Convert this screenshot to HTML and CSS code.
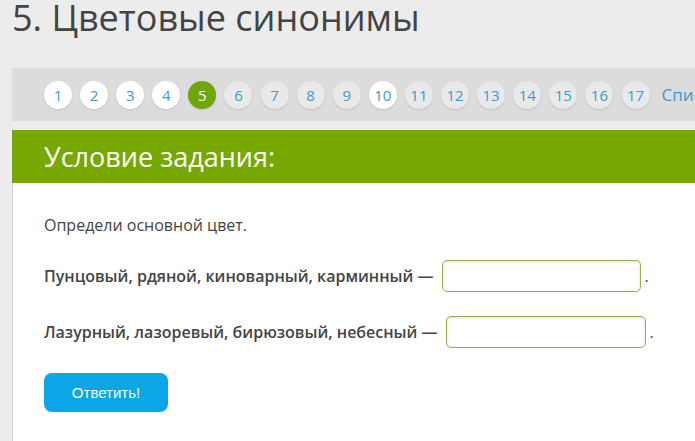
FILE: index.html
```html
<!DOCTYPE html>
<html lang="ru">
<head>
    <meta charset="UTF-8">
    <title>5. Цветовые синонимы</title>
    <link rel="stylesheet" href="styles.css">
</head>
<body>

<div class="page">
    <h1 class="task-title">5. Цветовые синонимы</h1>

    <nav class="pager">
        <a class="pager-item done" href="#">1</a>
        <a class="pager-item done" href="#">2</a>
        <a class="pager-item done" href="#">3</a>
        <a class="pager-item done" href="#">4</a>
        <a class="pager-item active" href="#">5</a>
        <a class="pager-item" href="#">6</a>
        <a class="pager-item" href="#">7</a>
        <a class="pager-item" href="#">8</a>
        <a class="pager-item" href="#">9</a>
        <a class="pager-item done" href="#">10</a>
        <a class="pager-item" href="#">11</a>
        <a class="pager-item" href="#">12</a>
        <a class="pager-item" href="#">13</a>
        <a class="pager-item" href="#">14</a>
        <a class="pager-item" href="#">15</a>
        <a class="pager-item" href="#">16</a>
        <a class="pager-item" href="#">17</a>
        <a class="pager-list" href="#">Список заданий</a>
    </nav>

    <section class="task">
        <h2 class="task-head">Условие задания:</h2>
        <div class="task-body">
            <p class="intro">Определи основной цвет.</p>

            <div class="answer-row">
                <span class="answer-label">Пунцовый, рдяной, киноварный, карминный —</span>
                <input class="answer-input first" type="text">
                <span class="dot">.</span>
            </div>

            <div class="answer-row">
                <span class="answer-label">Лазурный, лазоревый, бирюзовый, небесный —</span>
                <input class="answer-input" type="text">
                <span class="dot">.</span>
            </div>

            <button class="submit" type="button">Ответить!</button>
        </div>
    </section>
</div>

</body>
</html>
```

FILE: styles.css
```css
/* Global */
html, body {
    margin: 0;
    padding: 0;
    height: 100%;
    overflow: hidden;
}

body {
    background: #ececec;
    font-family: 'Open Sans', 'Noto Sans', sans-serif;
    color: #444;
}

.page {
    padding-left: 12px;
}

/* Title */
.task-title {
    margin: 0 0 32px;
    font-size: 36px;
    font-weight: normal;
    line-height: 36px;
    color: #444;
    white-space: nowrap;
}

/* Pager */
.pager {
    display: flex;
    align-items: center;
    gap: 8.1px;
    height: 53px;
    padding-left: 32px;
    background: #dcdcdc;
    white-space: nowrap;
}

.pager-item {
    flex: none;
    width: 28px;
    height: 28px;
    border-radius: 50%;
    background: #e9e9e9;
    box-shadow: 0 1px 2px rgba(0, 0, 0, 0.12);
    color: #3c9ad6;
    font-size: 15px;
    line-height: 28px;
    text-align: center;
    text-decoration: none;
}

.pager-item.done {
    background: #fff;
}

.pager-item.active {
    background: #70a60b;
    color: #fff;
}

.pager-list {
    margin-left: 4px;
    color: #3c9ad6;
    font-size: 17px;
    text-decoration: none;
}

/* Task panel */
.task {
    margin-top: 9px;
}

.task-head {
    margin: 0;
    height: 53px;
    padding-left: 32px;
    background: #76a801;
    color: #fff;
    font-size: 27px;
    font-weight: normal;
    line-height: 53px;
}

.task-body {
    height: 228px;
    padding: 30px 0 0 31px;
    background: #fff;
    border-left: 1px solid #d2d2d2;
}

.intro {
    margin: 0 0 23px;
    font-size: 16px;
    line-height: 24px;
}

.answer-row {
    display: flex;
    align-items: center;
    height: 32px;
    margin-bottom: 24px;
    font-size: 16px;
    font-weight: 600;
    line-height: 24px;
    white-space: nowrap;
}

.answer-input {
    box-sizing: border-box;
    width: 200px;
    height: 32px;
    margin-left: 8px;
    border: 1px solid #94b04a;
    border-radius: 5px;
    background: #fff;
    box-shadow: inset 0 1px 3px rgba(0, 0, 0, 0.12);
    outline: none;
}

.answer-input.first {
    width: 199px;
}

.dot {
    margin-left: 4px;
    font-weight: normal;
}

/* Button */
.submit {
    margin-top: 1px;
    width: 124px;
    height: 39px;
    border: none;
    border-radius: 8px;
    background: #0ba6e8;
    color: #fff;
    font-family: 'Liberation Sans', Arial, sans-serif;
    font-size: 15px;
    cursor: pointer;
}
```
